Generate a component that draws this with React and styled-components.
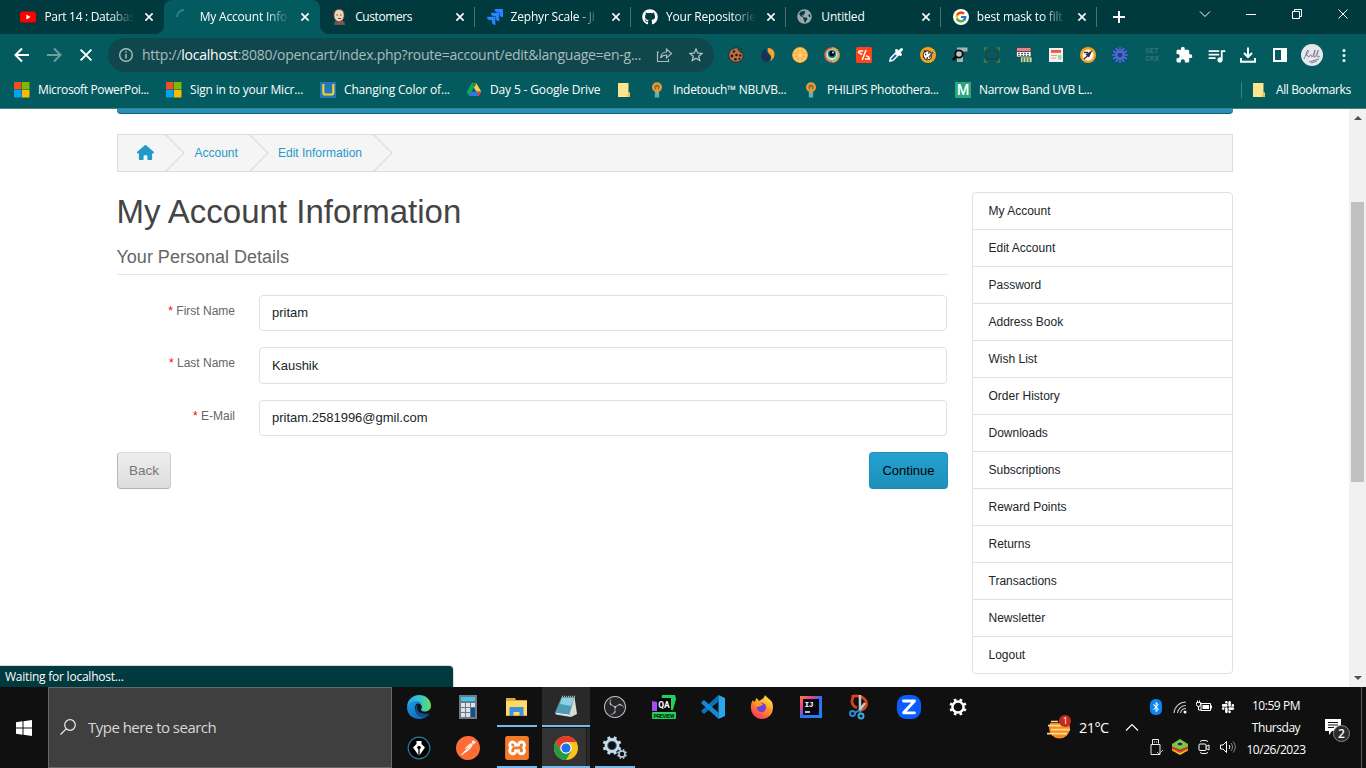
import React from "react";
import styled, { createGlobalStyle, css } from "styled-components";
import { FaYoutube, FaGithub, FaBluetoothB, FaSlack, FaGlobeAmericas } from "react-icons/fa";
import { FaHouse } from "react-icons/fa6";
import { FcGoogle } from "react-icons/fc";
import { SiJira, SiPostman, SiXampp, SiObsstudio } from "react-icons/si";
import { MdExtension, MdQueueMusic, MdStarBorder } from "react-icons/md";

const ui = `"Open Sans", "Noto Sans", sans-serif`;
const web = `"Liberation Sans", Arial, sans-serif`;

const GlobalStyle = createGlobalStyle`
  * { box-sizing: border-box; }
  html, body { margin: 0; padding: 0; background: #fff; overflow: hidden; }
  svg { display: block; flex: none; overflow: visible; }
`;

const Screen = styled.div`
  width: 1366px;
  height: 768px;
  display: flex;
  flex-direction: column;
  overflow: hidden;
  font-family: ${ui};
`;

/* ---------- browser chrome ---------- */

const Header = styled.header`
  height: 109px;
  flex: none;
  background: #035b60;
  border-bottom: 1px solid #44807f;
  color: #fff;
`;

const TabStrip = styled.div`
  height: 34px;
  background: #00393e;
  display: flex;
  padding-left: 9px;
`;

const Tab = styled.div`
  position: relative;
  width: 155.4px;
  height: 34px;
  flex: none;
  display: flex;
  align-items: center;
  padding: 0 0 0 11.4px;
  ${(p) =>
    p.$active &&
    css`
      background: #035b60;
      border-radius: 8px 8px 0 0;
      &::before,
      &::after {
        content: "";
        position: absolute;
        bottom: 0;
        width: 8px;
        height: 8px;
      }
      &::before {
        left: -8px;
        background: radial-gradient(circle at 0 0, transparent 7.5px, #035b60 8px);
      }
      &::after {
        right: -8px;
        background: radial-gradient(circle at 100% 0, transparent 7.5px, #035b60 8px);
      }
    `}
  ${(p) =>
    p.$divider &&
    css`
      &::after {
        content: "";
        position: absolute;
        right: 0;
        top: 7px;
        width: 1px;
        height: 20px;
        background: #4b7275;
      }
    `}
`;

const TabTitle = styled.span`
  width: 93px;
  margin: 0 8px;
  white-space: nowrap;
  font-size: 12px;
  line-height: 18px;
  letter-spacing: ${(p) => p.$ls ?? -0.2}px;
  ${(p) =>
    p.$fade &&
    css`
      mask-image: linear-gradient(90deg, #000 70%, transparent 97%);
    `}
`;

const NewTab = styled.div`
  width: 44px;
  display: flex;
  align-items: center;
  justify-content: center;
`;

const WindowControls = styled.div`
  margin-left: auto;
  display: flex;
  height: 28px;
  align-items: center;
`;

const WindowButton = styled.div`
  width: 46px;
  display: flex;
  justify-content: center;
`;

const Toolbar = styled.div`
  height: 42px;
  display: flex;
  align-items: center;
  padding-left: 6px;
`;

const ToolButton = styled.div`
  width: 32px;
  height: 32px;
  display: flex;
  align-items: center;
  justify-content: center;
`;

const AddressBar = styled.div`
  width: 606px;
  height: 34px;
  margin: 0 6px;
  border-radius: 17px;
  background: #10474d;
  display: flex;
  align-items: center;
  padding: 0 2px 0 10px;
  color: #a9bcbe;
`;

const Url = styled.span`
  flex: 1;
  margin-left: 8px;
  font-size: 14px;
  line-height: 20px;
  letter-spacing: -0.25px;
  white-space: nowrap;
  b {
    font-weight: 400;
    color: #fff;
  }
`;

const BookmarkBar = styled.div`
  height: 30px;
  display: flex;
  align-items: center;
  padding: 0 15px 2px 14px;
`;

const Bookmark = styled.div`
  display: flex;
  align-items: center;
  gap: 8px;
  width: ${(p) => p.$w}px;
  font-size: 12px;
  line-height: 18px;
  letter-spacing: ${(p) => p.$ls ?? -0.33}px;
  white-space: nowrap;
`;

const BookmarkDivider = styled.div`
  width: 1px;
  height: 16px;
  margin: 0 10px 0 auto;
  background: #44807f;
`;

const Tile = styled.div`
  width: 16px;
  height: 16px;
  background: #26a87c;
  font: 500 14px/16px Roboto, sans-serif;
  text-align: center;
  letter-spacing: 0;
`;

const CrxLabel = styled.span`
  font: 500 7px/8px Roboto, sans-serif;
  color: #39777b;
  text-align: center;
  letter-spacing: 0.2px;
`;

/* ---------- web page ---------- */

const Viewport = styled.main`
  position: relative;
  height: 578px;
  flex: none;
  display: flex;
  background: #fff;
  font-family: ${web};
`;

const Page = styled.div`
  width: 1349px;
  padding: 0 116px 0 117px;
`;

const MenuEdge = styled.div`
  height: 5px;
  background: #2390bd;
  border-bottom: 1px solid #145e7a;
  border-radius: 0 0 4px 4px;
`;

const Breadcrumb = styled.nav`
  height: 38px;
  margin-top: 20px;
  border: 1px solid #ddd;
  background: #f5f5f5;
  display: flex;
  align-items: center;
  font-size: 12px;
  color: #229ac8;
`;

const Crumb = styled.div`
  width: ${(p) => p.$w}px;
  height: 36px;
  display: flex;
  align-items: center;
  justify-content: space-between;
  padding-left: ${(p) => p.$pad}px;
`;

const HomeLink = styled.span`
  padding-bottom: 2px;
`;

const Columns = styled.div`
  display: flex;
  justify-content: space-between;
  margin-top: 20px;
`;

const Content = styled.section`
  width: 831px;
`;

const Title = styled.h1`
  margin: 0 0 0 -0.5px;
  font-size: 33px;
  line-height: 39px;
  font-weight: 400;
  color: #444;
`;

const Legend = styled.h2`
  margin: 13px 0 19.6px;
  height: 31px;
  font-size: 18px;
  line-height: 26px;
  font-weight: 400;
  color: #666;
  border-bottom: 1px solid #e5e5e5;
  text-indent: -0.5px;
`;

const Field = styled.div`
  display: flex;
  height: 36.5px;
  margin-bottom: 16px;
`;

const FieldLabel = styled.label`
  width: 142px;
  padding: 9.4px 24px 0 0;
  text-align: right;
  font-size: 12px;
  line-height: 14px;
  color: #666;
  &::before {
    content: "* ";
    color: #f00;
  }
`;

const Input = styled.input`
  width: 688px;
  height: 36.5px;
  padding: 0 12px;
  border: 1px solid #dee2e6;
  border-radius: 4px;
  background: #fff;
  font-family: ${web};
  font-size: 13px;
  color: #212529;
  outline: none;
`;

const Actions = styled.div`
  display: flex;
  justify-content: space-between;
`;

const Button = styled.button`
  width: ${(p) => p.$w}px;
  height: 37px;
  padding: 0;
  border-radius: 4px;
  border: 1px solid;
  font-family: ${web};
  font-size: 13px;
  ${(p) =>
    p.$primary
      ? css`
          color: #000;
          background: linear-gradient(#23a1d1, #1f90bb);
          border-color: #1f90bb #1f90bb #1e88b1;
        `
      : css`
          color: #777;
          font-size: 13.5px;
          background: linear-gradient(#eee, #ddd);
          border-color: #ddd #ccc #b3b3b3 #b7b7b7;
        `}
`;

const SideMenu = styled.aside`
  width: 261px;
  height: 482px;
  border: 1px solid #dee2e6;
  border-radius: 4px;
`;

const SideItem = styled.div`
  height: 37px;
  padding-left: 15.5px;
  font-size: 12px;
  line-height: 36px;
  color: #212529;
  border-bottom: 1px solid #dee2e6;
  &:last-child {
    border-bottom: 0;
  }
`;

const Scrollbar = styled.div`
  width: 17px;
  background: #f1f1f1;
  display: flex;
  flex-direction: column;
  align-items: center;
  justify-content: space-between;
  padding: 6px 0;
`;

const Thumb = styled.div`
  width: 13px;
  height: 280px;
  margin: 0 0 112px;
  background: #c1c1c1;
`;

const StatusBubble = styled.div`
  position: absolute;
  left: 0;
  bottom: 0;
  width: 453px;
  height: 21px;
  padding-left: 5px;
  background: #00393e;
  border-radius: 0 4px 0 0;
  box-shadow: 0 0 0 1px #d5dedf;
  clip-path: inset(-1px -1px 0 0);
  font: 12px/21px ${ui};
  letter-spacing: -0.23px;
  color: #fff;
`;

/* ---------- taskbar ---------- */

const Taskbar = styled.footer`
  height: 81px;
  flex: none;
  background: #101010;
  display: flex;
  color: #fff;
`;

const Start = styled.div`
  width: 48px;
  display: flex;
  align-items: center;
  justify-content: center;
`;

const Search = styled.div`
  width: 344px;
  background: #3f3f3f;
  border: 1px solid #686868;
  display: flex;
  align-items: center;
  gap: 12px;
  padding: 0 0 2px 11px;
  font-size: 15px;
  letter-spacing: -0.52px;
  color: #d8d8d8;
`;

const AppGrid = styled.div`
  display: grid;
  grid-template-columns: repeat(12, 48px);
  grid-template-rows: 40px 40px;
  column-gap: 1px;
  row-gap: 1px;
  margin-left: 3px;
`;

const AppCell = styled.div`
  display: flex;
  flex-direction: column;
  align-items: center;
  justify-content: space-between;
  padding-top: 8px;
  background: ${(p) => p.$bg || "transparent"};
`;

const RunningBar = styled.div`
  width: ${(p) => p.$w}px;
  height: 2px;
  background: #76b9ed;
`;

const Weather = styled.div`
  width: 64px;
  margin-left: 65px;
  display: flex;
  align-items: center;
  gap: 8px;
  font-size: 14.5px;
  letter-spacing: -0.6px;
`;

const Chevron = styled.div`
  width: 34px;
  display: flex;
  align-items: center;
  justify-content: center;
  margin-left: 4px;
`;

const Tray = styled.div`
  display: grid;
  grid-template-columns: repeat(4, 24px);
  grid-template-rows: 40px 40px;
  place-items: center;
  margin-left: -5px;
`;

const Clock = styled.div`
  width: 72px;
  padding-top: 8px;
  text-align: center;
  font-size: 12px;
  line-height: 22px;
  letter-spacing: -0.45px;
`;

const Notifications = styled.div`
  display: flex;
  align-items: center;
  margin-left: 13px;
`;

const Badge = styled.span`
  width: 17px;
  height: 17px;
  margin: 12px 0 0 -9px;
  border-radius: 50%;
  background: #2b2b2b;
  border: 1px solid #8a8a8a;
  font-size: 12px;
  font-weight: 600;
  line-height: 15px;
  text-align: center;
`;

const DesktopEdge = styled.div`
  margin-left: auto;
  width: 5px;
  border-left: 1px solid #5a5a5a;
`;

/* ---------- small drawings ---------- */

const Svg = ({ s = 16, vb = 16, children, ...rest }) => (
  <svg width={s} height={s} viewBox={`0 0 ${vb} ${vb}`} fill="none" {...rest}>
    {children}
  </svg>
);

const CloseIcon = ({ s = 8, w = 1.6 }) => (
  <Svg s={s} vb={8}>
    <path d="M.4.4l7.2 7.2M7.6.4L.4 7.6" stroke="#fff" strokeWidth={w} />
  </Svg>
);

const YoutubeIcon = () => (
  <Svg>
    <rect y="2.5" width="16" height="11" rx="2.6" fill="#f00" />
    <path d="M6.4 5.6v4.8L10.6 8z" fill="#fff" />
  </Svg>
);

const Spinner = () => (
  <Svg>
    <path d="M1 8a7 7 0 0 1 7-7" stroke="#2f8098" strokeWidth="1.8" />
  </Svg>
);

const JenkinsIcon = () => (
  <Svg>
    <path d="M3 16c0-3 1-4 3-5h4c3 1 4 2 4 5z" fill="#48606e" />
    <path d="M3 6c0-4 2-5.500 5-5.500S13 2 13 6c0 4-2 6.500-5 6.500S3 10 3 6z" fill="#efd5b8" stroke="#6b4a3c" strokeWidth=".7" />
    <path d="M3 5c1-1 1-3 2-4C2 2 2 4 3 7z" fill="#55423b" />
    <path d="M5.500 6h1.500M9 6h1.500M7 9.500h3" stroke="#4b342b" strokeWidth=".9" />
    <path d="M7 12.500l2 1 3-1.500v3.500l-3-1-2 1z" fill="#d33833" />
  </Svg>
);

const MicrosoftIcon = () => (
  <Svg>
    <path d="M0 0h7.500v7.500H0z" fill="#f25022" />
    <path d="M8 0h7.500v7.500H8z" fill="#7fba00" />
    <path d="M0 8h7.500v7.500H0z" fill="#00a4ef" />
    <path d="M8 8h7.500v7.500H8z" fill="#ffb900" />
  </Svg>
);

const UIcon = () => (
  <Svg>
    <path d="M0 0h16v16H0z" fill="#2478b8" />
    <path d="M3.300 2v8.500a2 2 0 0 0 2 2h6a2 2 0 0 0 2-2V2" stroke="#f5cf2f" strokeWidth="2.200" />
  </Svg>
);

const DriveIcon = () => (
  <Svg>
    <path d="M5.500 1.500L.7 10l2.500 4 4.900-8.500z" fill="#11a861" />
    <path d="M5.500 1.500h5l4.900 8.300h-5z" fill="#ffcf48" />
    <path d="M5.500 1.500h5L8 5.700z" fill="#188a3f" />
    <path d="M3.200 14l2.400-4.200h9.700L12.800 14z" fill="#3777e3" />
    <path d="M10.400 9.800h4.900L12.800 14z" fill="#e54335" />
  </Svg>
);

const FolderIcon = () => (
  <Svg>
    <path d="M1 1h10.500v9.500H13V15H1z" fill="#ffe48f" />
    <path d="M10.500 11.500h2.300V15h-2.300z" fill="#e4bd4f" />
  </Svg>
);

const BulbIcon = () => (
  <Svg>
    <circle cx="8" cy="5.200" r="3.800" stroke="#f3962b" strokeWidth="2.400" fill="#6a7a52" />
    <path d="M5.800 9h4.400v6.500H5.800z" fill="#4fb3bd" />
    <path d="M8 5v7" stroke="#f3962b" strokeWidth="1.800" />
  </Svg>
);

const CookieIcon = () => (
  <Svg>
    <path d="M10 .8C6 .2.800 3 .8 8.200c0 4 3.200 7 7.200 7s7.200-3 7.200-6.700c0-1-.2-2-.5-2.800-1.500.3-2.400-.3-2.500-1.500-1.300 0-2.300-1-2.200-3.400z" fill="#b97148" stroke="#2f2019" strokeWidth=".9" />
    <g fill="#231713">
      <circle cx="6" cy="4.500" r="1.200" />
      <circle cx="4" cy="9" r="1.400" />
      <circle cx="8.500" cy="8" r="1.300" />
      <circle cx="12.300" cy="8.500" r="1.200" />
      <circle cx="7.500" cy="12.300" r="1.300" />
      <circle cx="11.500" cy="11.800" r="1.100" />
      <circle cx="13.500" cy="2" r=".7" />
    </g>
  </Svg>
);

const SwirlIcon = () => (
  <Svg>
    <path d="M6 1.500C0 4-.5 12 4.500 14.500c4 1.200 7-1.500 5.500-5C8.500 6.500 5 6 6 1.500z" fill="#1c2f57" />
    <path d="M8 1c6 0 8 6 5.500 10-1 1.700-2 2.500-3.500 3 2-3 1.500-5-.5-7C7.800 5 7 3 8 1z" fill="#fba32b" />
  </Svg>
);

const OrangeIcon = () => (
  <Svg>
    <circle cx="8" cy="8" r="7.300" fill="#ffe3a6" stroke="#fda829" strokeWidth="1.200" />
    <circle cx="8" cy="8" r="6" fill="#fdae3c" />
    <path d="M8 2v12M2 8h12M3.800 3.800l8.400 8.400M12.200 3.800l-8.400 8.400" stroke="#ffe0a0" strokeWidth=".8" />
  </Svg>
);

const EyeIcon = () => (
  <Svg>
    <circle cx="8" cy="8" r="7.800" fill="#e8584a" />
    <path d="M8 .2A7.800 7.800 0 0 1 8 15.800z" fill="#f09a48" />
    <circle cx="8" cy="8" r="6.300" fill="#8fce9d" />
    <circle cx="8" cy="7.500" r="4.900" fill="#f6f1d9" />
    <circle cx="8" cy="7" r="4" fill="#0f6e80" />
    <circle cx="8" cy="6.500" r="2.800" fill="#050b12" />
    <circle cx="9" cy="5.500" r=".9" fill="#fff" />
  </Svg>
);

const SlashIcon = () => (
  <Svg>
    <rect width="16" height="16" rx="1.500" fill="#ff4316" />
    <path d="M10 3L6.200 13M7.200 4H3.300L2.600 5.500l3.600 2M8.900 12h4.500l-.8-2.200L10 8.600" stroke="#fff" strokeWidth="1.500" />
  </Svg>
);

const DropperIcon = () => (
  <Svg>
    <path d="M1.800 14.200L2.500 11l6.500-6.500 2.500 2.500L5 13.500z" fill="#e6f4ff" stroke="#fff" strokeWidth="1.300" />
    <path d="M3.500 12.500l4.500-4.500" stroke="#3158b4" strokeWidth="2" />
    <path d="M8.500 3.500l4 4M11.500 4.500L13.500 2.500" stroke="#fff" strokeWidth="3" strokeLinecap="round" />
  </Svg>
);

const BadgeBugIcon = () => (
  <Svg>
    <circle cx="8" cy="8" r="8" fill="#f9a31a" />
    <ellipse cx="7.500" cy="8.300" rx="4.200" ry="4.500" fill="#fff" stroke="#1e1c1b" strokeWidth="1" transform="rotate(-25 7.500 8.300)" />
    <path d="M4 3.500l2 1.500M5 7.500h1.200M8.200 6h1.200M6.500 11h1.500" stroke="#1c1c24" strokeWidth="1.400" />
    <path d="M9 10.500l4-5.500" stroke="#52577a" strokeWidth="1.700" />
  </Svg>
);

const MagnifierPageIcon = () => (
  <Svg>
    <path d="M5 .5h10.500v4H11v10.500H5z" fill="#a9b3b3" />
    <circle cx="7" cy="7" r="3.700" fill="#b7c6c6" stroke="#080808" strokeWidth="1.800" />
    <path d="M4.500 9.500L.8 13" stroke="#080808" strokeWidth="2.600" />
  </Svg>
);

const FrameIcon = () => (
  <Svg>
    <rect x="2.500" y="4" width="11" height="8" stroke="#303c3f" strokeWidth="1.300" />
    <path d="M.5 4V1h3M12.500 1h3v3M15.500 12v3h-3M3.500 15h-3v-3" stroke="#3c8438" strokeWidth="1.400" />
  </Svg>
);

const TableIcon = () => (
  <Svg>
    <path d="M.5.500h14.500v4H.5z" fill="#e8808a" stroke="#293739" strokeWidth=".7" />
    <path d="M.5 4.500h14.500v5.500H.5z" fill="#f6ffff" stroke="#293739" strokeWidth=".7" />
    <path d="M4.500 10h11.500v5.500H4.500z" fill="#b5e8a4" stroke="#293739" strokeWidth=".7" />
    <path d="M2 6.300h12M2 8.300h12M6 12h9M6 14h9" stroke="#233034" strokeWidth=".9" strokeDasharray="2 1" />
  </Svg>
);

const FormIcon = () => (
  <Svg>
    <path d="M1 1h14v14H1z" fill="#f3f1ec" />
    <path d="M3 3h10v2.800H3z" fill="#ee554d" />
    <path d="M3 8.500h6M3 11h5" stroke="#ef9b94" strokeWidth="1" />
    <path d="M10 8h3.500v4.500H10z" fill="#9bd6a8" />
  </Svg>
);

const CompassIcon = () => (
  <Svg>
    <circle cx="8" cy="8" r="8" fill="#f7a21d" />
    <circle cx="8" cy="8" r="5.500" fill="#fff" />
    <path d="M12.500 3L9 10.500 5.500 7.500z" fill="#383028" />
    <path d="M4 12l4-3.500M4 5.500h4" stroke="#383028" strokeWidth="1.300" />
  </Svg>
);

const BurstIcon = () => (
  <Svg>
    {[0, 30, 60, 90, 120, 150, 180, 210, 240, 270, 300, 330].map((a) => (
      <path key={a} d="M8 4.600V.8" stroke="#5b62f4" strokeWidth="1.700" strokeLinecap="round" transform={`rotate(${a} 8 8)`} />
    ))}
    <circle cx="8" cy="8" r="3.600" stroke="#5b62f4" strokeWidth="1.600" />
  </Svg>
);

const DownloadIcon = () => (
  <Svg>
    <path d="M8 .5v9M4 6l4 4 4-4M1 11v3.800h14V11" stroke="#fff" strokeWidth="2" />
  </Svg>
);

const PanelIcon = () => (
  <Svg>
    <path d="M2 2h12v12H2z" stroke="#fff" strokeWidth="2" />
    <path d="M9 2h5v12H9z" fill="#fff" />
  </Svg>
);

const AvatarIcon = () => (
  <Svg s={22} vb={22}>
    <circle cx="11" cy="11" r="11" fill="#e6e8ec" />
    <path d="M3 15c2-4 3-9 4-9s0 4-2 5c2-1 2 3 3 2s1-3 2-2 0 3 2 1l2-6c0 3-2 6-1 7s3-3 4-6-1 3-1 5 2 1 3 0M8 18l10-3M10 19l6-2" stroke="#6e7390" strokeWidth=".9" />
  </Svg>
);

const extensions = [
  <CookieIcon />, <SwirlIcon />, <OrangeIcon />, <EyeIcon />, <SlashIcon />, <DropperIcon />,
  <BadgeBugIcon />, <MagnifierPageIcon />, <FrameIcon />, <TableIcon />, <FormIcon />, <CompassIcon />,
  <BurstIcon />, <CrxLabel>GET<br />CRX</CrxLabel>,
  <MdExtension size={18} />, <MdQueueMusic size={21} />, <DownloadIcon />, <PanelIcon />, <AvatarIcon />,
  <Svg><g fill="#fff"><circle cx="8" cy="3.500" r="1.500" /><circle cx="8" cy="8.500" r="1.500" /><circle cx="8" cy="13.500" r="1.500" /></g></Svg>,
];

const tabs = [
  { title: "Part 14 : Databas", icon: <YoutubeIcon />, fade: true, ls: -0.3 },
  { title: "My Account Info", icon: <Spinner />, fade: true, active: true },
  { title: "Customers", icon: <JenkinsIcon />, divider: true, ls: -0.4 },
  { title: "Zephyr Scale - Ji", icon: <SiJira size={16} color="#2684ff" />, fade: true, divider: true },
  { title: "Your Repositorie", icon: <FaGithub size={16} color="#fff" />, fade: true, divider: true },
  { title: "Untitled", icon: <FaGlobeAmericas size={15} color="#9aa7ad" />, divider: true },
  {
    title: "best mask to filt",
    icon: <Svg><circle cx="8" cy="8" r="8" fill="#fff" /><FcGoogle x="1.500" y="1.500" size={13} /></Svg>,
    fade: true,
    divider: true,
  },
];

const bookmarks = [
  { label: "Microsoft PowerPoi...", icon: <MicrosoftIcon />, w: 152, ls: -0.36 },
  { label: "Sign in to your Micr...", icon: <MicrosoftIcon />, w: 154, ls: -0.18 },
  { label: "Changing Color of...", icon: <UIcon />, w: 146, ls: -0.17 },
  { label: "Day 5 - Google Drive", icon: <DriveIcon />, w: 151, ls: -0.15 },
  { label: "", icon: <FolderIcon />, w: 32 },
  { label: "Indetouch™ NBUVB...", icon: <BulbIcon />, w: 154, ls: -0.3 },
  { label: "PHILIPS Photothera...", icon: <BulbIcon />, w: 152, ls: -0.34 },
  { label: "Narrow Band UVB L...", icon: <Tile>M</Tile>, w: 150, ls: -0.34 },
];

/* ---------- taskbar drawings ---------- */

const EdgeIcon = () => (
  <Svg s={24} vb={24}>
    <defs>
      <linearGradient id="edgeTop" x1="0" x2="1"><stop stopColor="#2aa7e8" /><stop offset=".6" stopColor="#36c8c5" /><stop offset="1" stopColor="#6be04f" /></linearGradient>
      <linearGradient id="edgeLow" x1="0" y1="0" x2="1" y2="1"><stop stopColor="#1b9de2" /><stop offset="1" stopColor="#0d59b0" /></linearGradient>
    </defs>
    <path d="M0 11C1 4 6 0 12 0c7 0 12 5 12 10.500 0 4-3 6-6.500 6-3 0-4-1.500-3.200-2.500 2-3-1-6-5-6-4 0-8 2-9.300 3z" fill="url(#edgeTop)" />
    <path d="M0 12c1-4 5-6 9-6 4 0 6.500 2.500 6.500 5 0-2-2-3-3.500-3-5 0-6 9 2 12.500 3 1.200 6 .5 8.500-2C20 22.500 16 24 12 24 5 24 0 19 0 12z" fill="url(#edgeLow)" />
    <path d="M8.500 15c0-3 1-5 3-6-4 6 1 11 11 9.500C16 25 8.500 21 8.500 15z" fill="#114a8b" />
  </Svg>
);

const CalculatorIcon = () => (
  <Svg s={24} vb={24}>
    <path d="M3 0h18v24H3z" fill="#6f7b82" />
    <path d="M5 2h14v4H5z" fill="#42c8f0" />
    {[8, 13, 18].map((y) => [5, 10, 15].map((x) => (
      <rect key={`${x}-${y}`} x={x} y={y} width="4" height="4" fill={x === 15 && y > 8 ? "#0d4f92" : "#dde3e6"} />
    )))}
    <path d="M15 16h4v3h-4z" fill="#0d4f92" />
  </Svg>
);

const ExplorerIcon = () => (
  <Svg s={24} vb={24}>
    <path d="M1 3h9l1 2h11v16H1z" fill="#e8a52a" />
    <path d="M1 6h21v14H1z" fill="#ffd969" />
    <path d="M4.500 12h14v9h-4v-4H8.500v4h-4z" fill="#3c91e0" />
  </Svg>
);

const NotepadIcon = () => (
  <Svg s={24} vb={24}>
    <path d="M7.500 2H21l-5 17.500L1 17.500z" fill="#4f9bb5" />
    <path d="M8 3h12l-3 8-11-2z" fill="#8ed0df" />
    <path d="M20.500 2l2.500 17-6 3-1.500-3z" fill="#d9dcd6" />
    <path d="M1 17.500l15 2L17 22 2 19.500z" fill="#d7e5ea" />
    <path d="M8 1.500h13.500" stroke="#c3b48b" strokeWidth="1.500" strokeDasharray="1 1" />
  </Svg>
);

const QaIcon = () => (
  <Svg s={24} vb={24}>
    <path d="M10 0h13l1 4-3 11H8z" fill="#25cf5d" />
    <path d="M0 6l5 1v9H0z" fill="#a74cf0" />
    <path d="M5 3h14v13H5z" fill="#050505" />
    <rect y="17" width="24" height="7" rx="1" fill="#22d65a" />
    <text x="12" y="12.500" fill="#fff" fontFamily="Roboto, sans-serif" fontWeight="700" fontSize="8.500" textAnchor="middle">QA</text>
    <text x="12" y="22.700" fill="#04200d" fontFamily="Roboto, sans-serif" fontWeight="700" fontSize="5.500" textAnchor="middle" textLength="21">PREVIEW</text>
  </Svg>
);

const VscodeIcon = () => (
  <Svg s={24} vb={24}>
    <path d="M17.500 0v6.500L3 19 .5 17v-1.500z" fill="#0a70b8" />
    <path d="M17.500 24v-6.500L3 5 .5 7v1.500z" fill="#1787cf" />
    <path d="M17.500 0L24 3v18l-6.500 3z" fill="#2aa5ee" />
  </Svg>
);

const FirefoxIcon = () => (
  <Svg s={24} vb={24}>
    <defs>
      <linearGradient id="fox" x1=".8" y1="0" x2=".2" y2="1"><stop stopColor="#fff04a" /><stop offset=".45" stopColor="#ff9a1f" /><stop offset="1" stopColor="#f52a67" /></linearGradient>
    </defs>
    <path d="M15 0c1 2 5 4 7 7 3 8-1 17-10 17C4 24 0 17 1 10c.3-2 1-4 2-5l1 2c1-1 2-2 2-4 2 1 2.500 2 3 3 2-1 5-2 6-6z" fill="url(#fox)" />
    <circle cx="11.500" cy="12.500" r="4.700" fill="#7443d6" />
    <path d="M5 8c3-1 6 0 8 1-1 2-3 1.500-5 3-2-1-3-2-3-4z" fill="#ff9b1f" />
  </Svg>
);

const IntellijIcon = () => (
  <Svg s={24} vb={24}>
    <defs>
      <linearGradient id="ij" x1="0" y1="0" x2="1" y2="1"><stop stopColor="#f97a3d" /><stop offset=".3" stopColor="#e7408f" /><stop offset=".5" stopColor="#3070f0" /><stop offset="1" stopColor="#1b86f5" /></linearGradient>
    </defs>
    <path d="M1 1h22v22H1z" fill="url(#ij)" />
    <path d="M4 4h16v16H4z" fill="#0a0610" />
    <path d="M6 17h5" stroke="#fff" strokeWidth="1.500" />
    <text x="5.500" y="12" fill="#fff" fontFamily="Liberation Mono, monospace" fontWeight="700" fontSize="8" textLength="9">IJ</text>
  </Svg>
);

const SnipIcon = () => (
  <Svg s={24} vb={24}>
    <path d="M3.500 1.500C14-1 19 5 18.500 9.500c-.5 3-3 5-6.500 6M5 2c-2 5-1 9 4 11" stroke="#d5421e" strokeWidth="2.800" />
    <path d="M12 0v16.500M17 8l-6 8" stroke="#c5c9cc" strokeWidth="2.500" />
    <circle cx="4.500" cy="18.500" r="2.500" stroke="#238fd5" strokeWidth="1.900" />
    <circle cx="13" cy="21" r="2.500" stroke="#3aabea" strokeWidth="1.900" />
    <path d="M7 18l4-3M12 15v3.500" stroke="#238fd5" strokeWidth="1.600" />
  </Svg>
);

const ZIcon = () => (
  <Svg s={24} vb={24}>
    <rect width="24" height="24" rx="9" fill="#0b5cff" />
    <path d="M6.500 6h11L6.500 17.800h11" stroke="#fff" strokeWidth="2.800" strokeLinejoin="round" strokeLinecap="round" />
  </Svg>
);

const Gear = ({ cx, cy, r, color, w }) => (
  <g transform={`translate(${cx} ${cy})`} stroke={color}>
    <circle r={r} strokeWidth={w} />
    {[0, 45, 90, 135, 180, 225, 270, 315].map((a) => (
      <path key={a} d={`M0 ${-r - w * 0.3}v${-w * 0.9}`} strokeWidth={w * 1.1} transform={`rotate(${a + 22.5})`} />
    ))}
  </g>
);

const SettingsIcon = () => (
  <Svg s={24} vb={24}><Gear cx={12} cy={12} r={5.6} w={2.5} color="#fff" /></Svg>
);

const ServicesIcon = () => (
  <Svg s={24} vb={24}>
    <Gear cx={9} cy={9.500} r={6} w={2.8} color="#c8dfee" />
    <circle cx="9" cy="9.500" r="4.300" stroke="#6e94b0" strokeWidth=".6" />
    <Gear cx={19} cy={18} r={3} w={1.600} color="#b5d0e4" />
  </Svg>
);

const PenIcon = () => (
  <Svg s={24} vb={24}>
    <circle cx="12" cy="12" r="10.800" fill="#000" stroke="#237d96" strokeWidth="1.200" />
    <path d="M9.500 5h5v3l3.500 3.500L12 20l-6-8.500L9.500 8z" fill="#fff" />
    <path d="M12 11v9" stroke="#000" strokeWidth="1.300" />
    <circle cx="12" cy="11.500" r="1.800" fill="#000" />
  </Svg>
);

const PostmanIcon = () => (
  <Svg s={24} vb={24}>
    <circle cx="12" cy="12" r="11" fill="#fff" />
    <SiPostman size={24} color="#ff6c37" />
  </Svg>
);

const XamppIcon = () => (
  <Svg s={24} vb={24}>
    <path d="M2 2h20v20H2z" fill="#fff" />
    <SiXampp size={24} color="#f47a2a" />
  </Svg>
);

const ChromeIcon = () => (
  <Svg s={24} vb={24}>
    <circle cx="12" cy="12" r="12" fill="#fbc116" />
    <path d="M1.600 6A12 12 0 0 1 22.400 6H12L6.800 15z" fill="#e33b2e" />
    <path d="M1.600 6A12 12 0 0 0 12 24l5.200-9L12 12 6.800 15z" fill="#229a48" />
    <circle cx="12" cy="12" r="5.800" fill="#fff" />
    <circle cx="12" cy="12" r="4.600" fill="#1b73e8" />
  </Svg>
);

const ObsIcon = () => (
  <Svg s={24} vb={24}>
    <circle cx="12" cy="12" r="10.500" fill="#262428" />
    <SiObsstudio x="1" y="1" size={22} color="#c5c3c6" />
  </Svg>
);

const apps = [
  { icon: <EdgeIcon /> }, { icon: <CalculatorIcon /> }, { icon: <ExplorerIcon />, bar: 40 },
  { icon: <NotepadIcon />, bar: 48, bg: "#292929" }, { icon: <ObsIcon /> }, { icon: <QaIcon /> },
  { icon: <VscodeIcon /> }, { icon: <FirefoxIcon /> }, { icon: <IntellijIcon /> }, { icon: <SnipIcon /> },
  { icon: <ZIcon /> }, { icon: <SettingsIcon /> },
  { icon: <PenIcon /> }, { icon: <PostmanIcon /> }, { icon: <XamppIcon />, bar: 40 },
  { icon: <ChromeIcon />, bar: 48, bg: "linear-gradient(90deg,#333 44px,#1c1c1c 44px,#1c1c1c 45px,#292929 45px)" },
  { icon: <ServicesIcon />, bar: 40 },
];

const WeatherIcon = () => (
  <Svg s={24} vb={24}>
    <circle cx="12.500" cy="12" r="10.500" fill="#f58b1f" />
    <path d="M0 0h17v7H0z" fill="#101010" />
    <path d="M4 5.500h7M1 9.700h18M4 13.700h19M0 17.700h20" stroke="#ffd98e" strokeWidth="1.700" />
    <circle cx="18" cy="5" r="6" fill="#c42b1c" />
    <text x="18" y="8.300" fill="#fff" fontFamily="Open Sans, sans-serif" fontSize="9" textAnchor="middle">1</text>
  </Svg>
);

const BluetoothTray = () => (
  <Svg>
    <rect x="2" width="12" height="16" rx="5.500" fill="#0a84f5" />
    <FaBluetoothB x="2.500" y="2.500" size={11} color="#fff" />
  </Svg>
);

const WifiTray = () => (
  <Svg>
    <g stroke="#c6c6c6" strokeWidth="1.100">
      <path d="M2 14A12 12 0 0 1 14 3M5.500 14A8.500 8.500 0 0 1 14 6.500M8.500 14A5.500 5.500 0 0 1 14 9.500" />
    </g>
    <circle cx="13" cy="13" r="1.500" fill="#fff" />
  </Svg>
);

const BatteryTray = () => (
  <Svg>
    <path d="M5 4.500h9.500v7H5z" stroke="#fff" />
    <path d="M6.500 6H13v4H6.500zM15 6.500h1v3h-1z" fill="#fff" />
    <path d="M.5 3.500h4v2a2 2 0 0 1-4 0zM1.500 1.500v2M3.500 1.500v2M2.500 7.500V11H5" stroke="#fff" strokeWidth="1" />
  </Svg>
);

const UsbTray = () => (
  <Svg>
    <path d="M4.500 5V.5h6v4M3 5.500h9v10H3z" stroke="#eee" />
    <path d="M6.500 2.500v1M8.500 2.500v1" stroke="#eee" />
    <path d="M9 13l2 2 4-4" stroke="#b9b9b9" />
  </Svg>
);

const LayersTray = () => (
  <Svg>
    <path d="M0 9l8 3.500L16 9v2.500L8 16l-8-4.500z" fill="#f5c320" />
    <path d="M0 7.500l8 4 8-4V10l-8 4-8-4z" fill="#e3392a" />
    <path d="M0 5L8 0l8 5v2.500L8 11 0 7.500z" fill="#7cc537" />
    <ellipse cx="8" cy="5" rx="3" ry="2" fill="#17304a" stroke="#c5e79b" strokeWidth=".7" />
  </Svg>
);

const CameraTray = () => (
  <Svg>
    <rect x="3" y="5" width="7" height="6.500" rx="1" stroke="#fff" />
    <path d="M10 7.500l3-1.500v5l-3-1.500M4 2.500c2-1.500 6-1.500 8 0M4 13.500c2 1.500 6 1.500 8 0" stroke="#fff" />
  </Svg>
);

const SpeakerTray = () => (
  <Svg>
    <path d="M.5 6H3l3.500-3.500v11L3 10H.5z" stroke="#fff" />
    <path d="M9 6c1 1 1 3 0 4" stroke="#fff" />
    <path d="M11 4c2 2.500 2 5.500 0 8M13 2.500c3 3.500 3 7.500 0 11" stroke="#8a8a8a" />
  </Svg>
);

const NoticeIcon = () => (
  <Svg s={17} vb={17}>
    <path d="M0 0h16v12H7l-3 4v-4H0z" fill="#fff" />
    <path d="M3 3.500h10M3 6h10M3 8.500h6" stroke="#101010" />
  </Svg>
);

const CrumbArrow = () => (
  <svg width="20" height="36" viewBox="0 0 20 36" fill="none">
    <path d="M.5-.5L19 18 .5 36.500" stroke="#ddd" strokeWidth="1.200" />
  </svg>
);

const menu = [
  "My Account", "Edit Account", "Password", "Address Book", "Wish List", "Order History", "Downloads",
  "Subscriptions", "Reward Points", "Returns", "Transactions", "Newsletter", "Logout",
];

const fields = [
  ["First Name", "pritam"],
  ["Last Name", "Kaushik"],
  ["E-Mail", "pritam.2581996@gmil.com"],
];

export default function App() {
  return (
    <Screen>
      <GlobalStyle />
      <Header>
        <TabStrip>
          {tabs.map((t) => (
            <Tab key={t.title} $active={t.active} $divider={t.divider}>
              <Svg>{t.icon}</Svg>
              <TabTitle $fade={t.fade} $ls={t.ls}>{t.title}</TabTitle>
              <CloseIcon />
            </Tab>
          ))}
          <NewTab>
            <Svg s={12} vb={12}><path d="M6 0v12M0 6h12" stroke="#fff" strokeWidth="2" /></Svg>
          </NewTab>
          <WindowControls>
            <WindowButton><Svg s={10} vb={10}><path d="M0 2.500l5 5 5-5" stroke="#fff" /></Svg></WindowButton>
            <WindowButton><Svg s={10} vb={10}><path d="M0 5.500h10" stroke="#fff" /></Svg></WindowButton>
            <WindowButton><Svg s={10} vb={10}><path d="M.5 2.500h7v7h-7zM2.500 2.500v-2h7v7h-2" stroke="#fff" /></Svg></WindowButton>
            <WindowButton><CloseIcon s={10} w={0.8} /></WindowButton>
          </WindowControls>
        </TabStrip>
        <Toolbar>
          <ToolButton><Svg><path d="M15 8H2M8 1.500L1.500 8 8 14.500" stroke="#fff" strokeWidth="2" /></Svg></ToolButton>
          <ToolButton><Svg><path d="M1 8h13M8 1.500L14.500 8 8 14.500" stroke="#6e9da0" strokeWidth="2" /></Svg></ToolButton>
          <ToolButton><CloseIcon s={12} w={1.3} /></ToolButton>
          <AddressBar>
            <Svg>
              <circle cx="8" cy="8" r="6.300" stroke="#a9bcbe" strokeWidth="1.400" />
              <path d="M8 7v4.500M8 4.300v1.500" stroke="#a9bcbe" strokeWidth="1.500" />
            </Svg>
            <Url>
              http://<b>localhost</b>:8080/opencart/index.php?route=account/edit&amp;language=en-g...
            </Url>
            <ToolButton>
              <Svg><path d="M3 5H1.500v9.500h11V12M4.500 11c.5-4 2.500-6 6-6V2l5 4.500-5 4.500V8c-3 0-4.500.8-6 3z" stroke="#a9bcbe" strokeWidth="1.200" /></Svg>
            </ToolButton>
            <ToolButton><MdStarBorder size={18} color="#b8c8ca" /></ToolButton>
          </AddressBar>
          {extensions.map((e, i) => <ToolButton key={i}>{e}</ToolButton>)}
        </Toolbar>
        <BookmarkBar>
          {bookmarks.map((b, i) => (
            <Bookmark key={i} $w={b.w} $ls={b.ls}>{b.icon}{b.label}</Bookmark>
          ))}
          <BookmarkDivider />
          <Bookmark $w={99} $ls={-0.4}><FolderIcon />All Bookmarks</Bookmark>
        </BookmarkBar>
      </Header>

      <Viewport>
        <Page>
          <MenuEdge />
          <Breadcrumb>
            <Crumb $w={67} $pad={19}><HomeLink><FaHouse size={17} color="#229ac8" /></HomeLink><CrumbArrow /></Crumb>
            <Crumb $w={84} $pad={9.5}>Account<CrumbArrow /></Crumb>
            <Crumb $w={124} $pad={9}>Edit Information<CrumbArrow /></Crumb>
          </Breadcrumb>
          <Columns>
            <Content>
              <Title>My Account Information</Title>
              <Legend>Your Personal Details</Legend>
              {fields.map(([label, value]) => (
                <Field key={label}>
                  <FieldLabel>{label}</FieldLabel>
                  <Input defaultValue={value} />
                </Field>
              ))}
              <Actions>
                <Button $w={54}>Back</Button>
                <Button $w={79} $primary>Continue</Button>
              </Actions>
            </Content>
            <SideMenu>
              {menu.map((m) => <SideItem key={m}>{m}</SideItem>)}
            </SideMenu>
          </Columns>
        </Page>
        <Scrollbar>
          <Svg s={8} vb={8}><path d="M0 5l4-4 4 4z" fill="#505050" /></Svg>
          <Thumb />
          <Svg s={8} vb={8}><path d="M0 3l4 4 4-4z" fill="#505050" /></Svg>
        </Scrollbar>
        <StatusBubble>Waiting for localhost...</StatusBubble>
      </Viewport>

      <Taskbar>
        <Start>
          <Svg><path d="M0 2.300L6.500 1.300v6.200H0zM7.500 1.200L16 0v7.500H7.500zM0 8.500h6.500v6.200L0 13.700zM7.500 8.500H16V16l-8.500-1.200z" fill="#fff" /></Svg>
        </Start>
        <Search>
          <Svg><circle cx="10" cy="6" r="5.300" stroke="#eee" strokeWidth="1.200" /><path d="M6.200 9.800L.5 15.500" stroke="#eee" strokeWidth="1.200" /></Svg>
          Type here to search
        </Search>
        <AppGrid>
          {apps.map((a, i) => (
            <AppCell key={i} $bg={a.bg}>
              {a.icon}
              {a.bar && <RunningBar $w={a.bar} />}
            </AppCell>
          ))}
        </AppGrid>
        <Weather><WeatherIcon />21°C</Weather>
        <Chevron><Svg s={12} vb={12}><path d="M0 8.500l6-6 6 6" stroke="#fff" strokeWidth="1.200" /></Svg></Chevron>
        <Tray>
          <BluetoothTray /><WifiTray /><BatteryTray /><FaSlack size={14} />
          <UsbTray /><LayersTray /><CameraTray /><SpeakerTray />
        </Tray>
        <Clock>10:59 PM<br />Thursday<br />10/26/2023</Clock>
        <Notifications><NoticeIcon /><Badge>2</Badge></Notifications>
        <DesktopEdge />
      </Taskbar>
    </Screen>
  );
}
